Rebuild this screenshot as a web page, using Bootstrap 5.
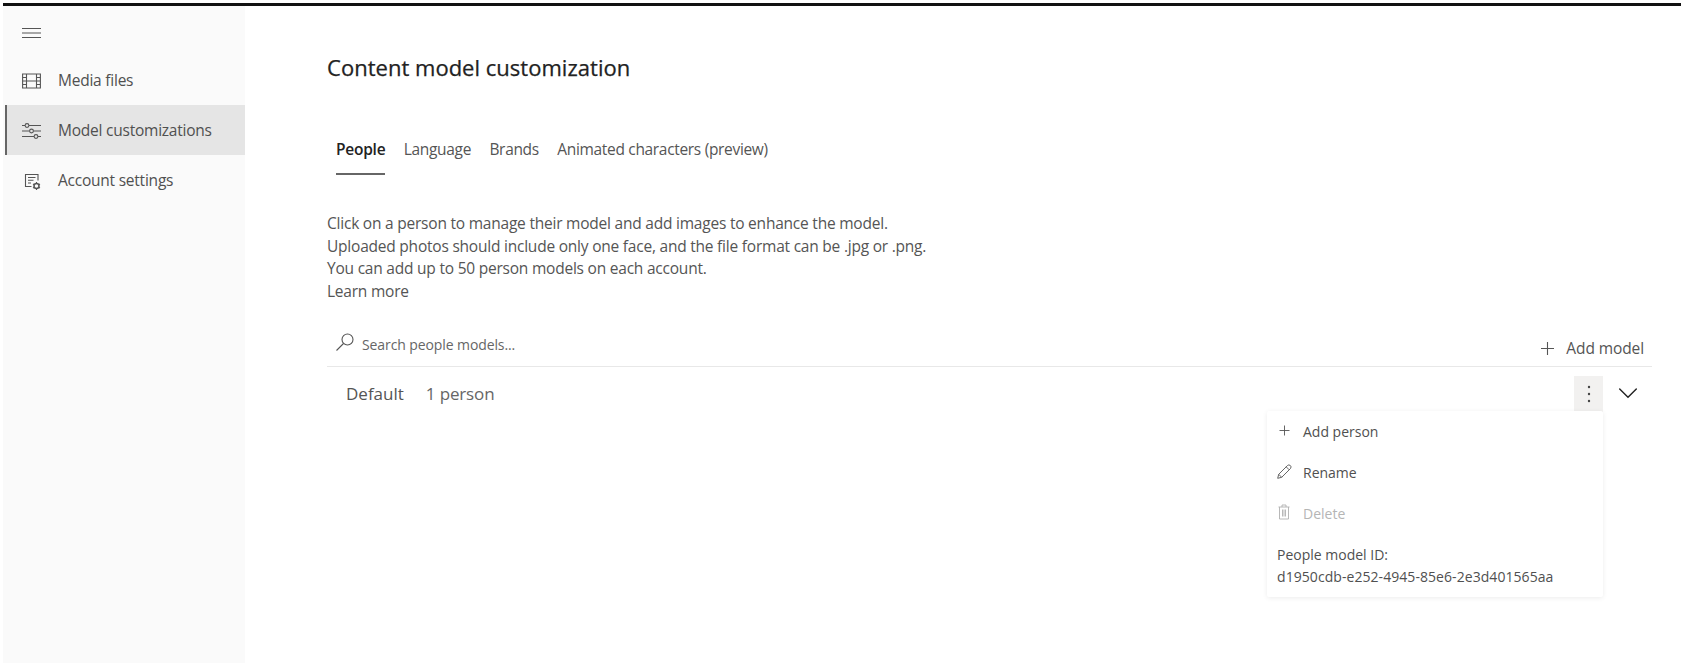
<!DOCTYPE html>
<html lang="en">
<head>
<meta charset="utf-8">
<title>Content model customization</title>
<link href="https://cdn.jsdelivr.net/npm/bootstrap@5.3.0/dist/css/bootstrap.min.css" rel="stylesheet">
<style>
body{font-family:"Open Sans","Noto Sans",sans-serif;font-size:15.5px;color:#555;height:665px;overflow:hidden;background:#fff;padding:3px 2px 2px 3px}
svg{display:block;flex:none;fill:none;stroke:#555;stroke-width:1.1}
.shell{border-top:3px solid #111;height:660px}
.side{width:242px;background:#fafafa;letter-spacing:-.23px}
.burger{padding:21px 0 0 19px;height:49px}
.side .nav-link{height:50px;padding:1px 0 0 15px;margin-left:2px;border-left:2px solid transparent;color:#505050;gap:17px}
.side .nav-link.active{background:#e5e5e5;border-left-color:#666}
.page{padding:43px 29px 0 82px}
.title{font-size:22px;line-height:36px;font-weight:500;color:#222;letter-spacing:.02px;-webkit-text-stroke:.25px #222}
.tabs{margin:52px 0 0 9px;gap:18.4px;letter-spacing:-.32px}
.tabs .nav-link{padding:0 0 12px;line-height:24px;color:#555;border-bottom:2px solid transparent}
.tabs .nav-link.active{color:#222;font-weight:600;border-color:#666;letter-spacing:-.25px}
.intro{line-height:22.5px;margin-top:37px;letter-spacing:-.22px}
.bar{height:65px;border-bottom:1px solid #e8e8e8;padding:0 8px 0 9px}
.find{font-size:14px;gap:8px;letter-spacing:-.1px;color:#666;padding-bottom:10px}
.find svg{margin-bottom:5px}
.add-model{gap:12px;padding-bottom:6px;letter-spacing:-.1px}
.model{height:54px;padding:0 15px 0 19px;font-size:17px}
.person-count{margin-left:22px;letter-spacing:-.15px;color:#666}
.more{width:29px;height:36px;background:#f2f1f0;border:0;margin-right:16px}
.more svg{fill:#444;stroke:none;margin:auto}
.tray{margin-top:-1px}
.menu.dropdown-menu{width:336px;height:186px;left:auto;right:34px;top:35px;border:0;border-radius:2px;padding:1px 10px;box-shadow:0 1px 5px rgba(0,0,0,.08);font-size:14px;color:#505050}
.menu .dropdown-item{height:40.7px;padding:0;gap:11px;color:#505050}
.menu .dropdown-item svg{stroke-width:.9;margin-bottom:2px}
.menu .dropdown-item.disabled{color:#b5b5b5}
.menu .disabled svg{stroke:#b0b0b0}
.model-id{line-height:22.500px;margin-top:10px}
.model-id span{letter-spacing:.06px}
</style>
</head>
<body>
<div class="shell d-flex">
 <aside class="side">
  <div class="burger"><svg width="19" height="12"><path d="M0 1.500h19M0 6h19M0 10.500h19"/></svg></div>
  <nav class="nav flex-column">
   <a class="nav-link d-flex align-items-center"><svg width="19" height="16"><path d="M.6 1h17.800v14H.6zM4.500 1v14M14.500 1v14M4.500 8h10M.6 4.500h3.900M.6 8h3.900M.6 11.500h3.900M14.500 4.500h3.900M14.500 8h3.900M14.500 11.500h3.900"/></svg><span>Media files</span></a>
   <a class="nav-link active d-flex align-items-center"><svg width="19" height="16"><path d="M0 2.500h3M7 2.500h12M0 8h7.500M11.500 8H19M0 13.500h12M16 13.500h3"/><circle cx="5" cy="2.500" r="1.900"/><circle cx="9.500" cy="8" r="1.900"/><circle cx="14" cy="13.500" r="1.900"/></svg><span>Model customizations</span></a>
   <a class="nav-link d-flex align-items-center"><svg width="19" height="18"><path d="M9.500 14.500H3.500V2.500H16V8.500M6 5.500h7.500M6 8.200h5.500M6 11h3"/><circle cx="14.500" cy="14" r="2.500" stroke-width="1.500"/><path d="M14.500 10v1.500M14.500 16.500V18M11 12l1.300.7M16.700 15.300l1.300.7M11 16l1.300-.7M16.700 12.700l1.300-.7"/></svg><span>Account settings</span></a>
  </nav>
 </aside>
 <main class="page flex-grow-1">
  <h1 class="title m-0">Content model customization</h1>
  <nav class="nav tabs">
   <a class="nav-link active">People</a><a class="nav-link">Language</a><a class="nav-link">Brands</a><a class="nav-link">Animated characters (preview)</a>
  </nav>
  <div class="intro">Click on a person to manage their model and add images to enhance the model.<br>Uploaded photos should include only one face, and the file format can be .jpg or .png.<br>You can add up to 50 person models on each account.<br>Learn more</div>
  <div class="bar d-flex align-items-end justify-content-between">
   <div class="find d-flex align-items-center"><svg width="18" height="18"><circle cx="11.500" cy="6.500" r="5.500"/><path d="M7.500 10.500L.5 17.500"/></svg><span>Search people models...</span></div>
   <div class="add-model d-flex align-items-center"><svg width="13" height="13"><path d="M6.500 0v13M0 6.500h13"/></svg><span>Add model</span></div>
  </div>
  <div class="model d-flex align-items-center">
   <span>Default</span><span class="person-count">1 person</span>
   <div class="tray position-relative d-flex align-items-center ms-auto">
    <button class="more p-0" aria-label="More"><svg width="4" height="20"><circle cx="2" cy="3" r="1.200"/><circle cx="2" cy="10" r="1.200"/><circle cx="2" cy="17" r="1.200"/></svg></button>
    <svg width="18" height="11" stroke-linecap="round"><path d="M.7 1L9 9.300 17.300 1" stroke="#222" stroke-width="1.400"/></svg>
    <div class="dropdown-menu menu show">
     <a class="dropdown-item d-flex align-items-center"><svg width="15" height="15"><path d="M7.500 2.500v10M2.500 7.500h10"/></svg>Add person</a>
     <a class="dropdown-item d-flex align-items-center"><svg width="15" height="15"><path d="M.7 14.300l1-4L10.500 1.500q1.300-1.200 2.800 0t.2 3L4.700 13.300zM9.200 2.800l3 3M1.700 10.300l3 3"/></svg>Rename</a>
     <a class="dropdown-item disabled d-flex align-items-center"><svg width="15" height="16"><path d="M1.500 3h11M5 3V1h4v2M2.500 3v12h9V3M5.500 5.500v7M7 5.500v7M8.500 5.500v7"/></svg>Delete</a>
     <div class="model-id">People model ID:<br><span>d1950cdb-e252-4945-85e6-2e3d401565aa</span></div>
    </div>
   </div>
  </div>
 </main>
</div>
<script src="https://cdn.jsdelivr.net/npm/bootstrap@5.3.0/dist/js/bootstrap.bundle.min.js"></script>
</body>
</html>
